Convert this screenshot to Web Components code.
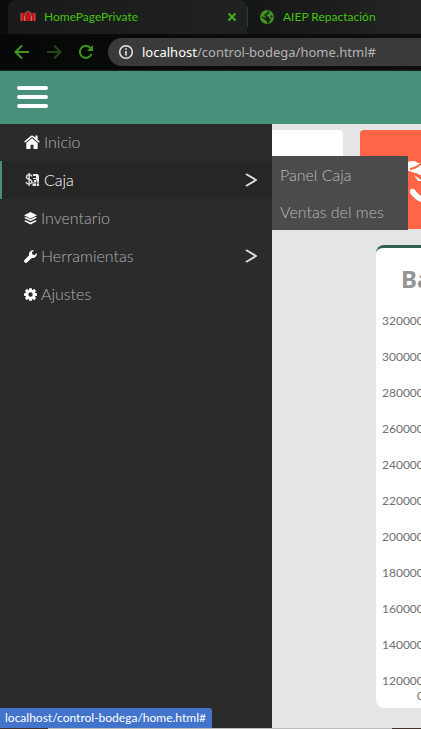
<!DOCTYPE html>
<html lang="es">
<head>
<meta charset="utf-8">
<title>HomePagePrivate</title>
<style>
html, body { height: 100%; margin: 0; }
body { background: #e5e5e5; overflow: hidden; font-family: "Noto Sans", sans-serif; }
</style>
</head>
<body>
<app-window></app-window>
<script>
const define = (name, html) => customElements.define(name, class extends HTMLElement {
  constructor() {
    super();
    this.attachShadow({ mode: "open" }).innerHTML = html;
  }
});

const icons = {
  home: '<svg viewBox="0 0 16 16"><path fill="currentColor" d="M8 4.2 2.3 9v5.2q0 .8.8.8h3.4v-4.2h3V15h3.4q.8 0 .8-.8V9zM15.8 7.6 13.6 5.700V1.500h-2.200v2.300L9 1.800Q8 1 7 1.800L.2 7.600l1 1.100L8 2.900l6.800 5.800z"/></svg>',
  cash: '<svg viewBox="0 0 16 16"><path fill="none" stroke="#d8d8d8" stroke-width="1.500" d="M8 4.500Q7.400 2.800 5.200 2.800C1.900 2.800 1.700 6.300 4.200 7.100L6.100 7.700C8.700 8.500 8.200 12 5.100 12Q2.700 12 2 10M5.200 1v13"/><path fill="#e4e4e4" d="M9 2h4.500L15 3.500V14H8.500v-4H10V8h2V7H9V6h3V4H9z"/><path stroke="#2b2b2b" stroke-width=".8" d="M9 11h6M12.500 8.500V14"/></svg>',
  layers: '<svg viewBox="0 0 16 16"><path fill="currentColor" d="m8 0 8 4-8 4-8-4zM0 7.200l2.200-1L8 9l5.800-2.800 2.200 1-8 4zM0 11.200l2.200-1L8 13l5.800-2.800 2.200 1-8 4.300z"/></svg>',
  wrench: '<svg viewBox="0 0 16 16"><path fill="currentColor" d="M15.600 3.700 13 6.300l-2.600-.7-.7-2.600L12.300.4C8.500-.5 5.300 2.700 6.300 6.500L.8 12a2 2 0 0 0 3.200 3.200l5.500-5.500c3.800 1 7-2.200 6.100-6z"/></svg>',
  gear: '<svg viewBox="0 0 16 16"><circle cx="8" cy="8" r="4.500" fill="none" stroke="currentColor" stroke-width="3.600"/><g stroke="currentColor" stroke-width="3.600"><path d="M8 .2v3M8 12.800v3M.2 8h3M12.800 8h3M2.300 2.300l2 2M11.700 11.700l2 2M13.700 2.300l-2 2M4.300 11.700l-2 2"/></g></svg>'
};

define("browser-tab", `<style>
:host { display: flex; align-items: center; box-sizing: border-box; height: 34px; color: #42c40f; font: 12px/16px Lato, sans-serif; white-space: nowrap; }
.title { flex: 1; }
::slotted(svg) { width: 16px; height: 16px; margin-right: 8px; flex: none; }
</style><slot name="icon"></slot><span class="title"><slot></slot></span><slot name="close"></slot>`);

define("browser-bar", `<style>
:host { display: block; background: #080a0a; }
.tabs { display: flex; background: linear-gradient(90deg, #0b0d0c, #151716 60%, #242525); }
.active { width: 239px; flex: none; padding: 0 9px 0 12px; background: linear-gradient(90deg, #191a1a, #202121); border-radius: 8px 8px 0 0; margin-left: 8px; }
.other { flex: 1; padding-left: 11px; }
.sep { width: 1px; height: 20px; margin-top: 7px; background: #1b4a20; }
button { border: 0; padding: 0; background: none; color: #3e9620; display: flex; }
.close { color: #42b018; }
.forward { color: #234a18; }
.tools { display: flex; align-items: center; height: 36px; padding-left: 14px; gap: 16px; background: linear-gradient(90deg, #060808, #0d0f0f); overflow: hidden; }
.tools svg { width: 16px; height: 16px; }
.address { flex: 1; display: flex; align-items: center; height: 28px; box-sizing: border-box; padding-left: 10px; gap: 8px; background: #3a3a3a; border-radius: 14px 0 0 14px; color: #e8e8e8; margin-left: -2px; }
.url { font-size: 13px; line-height: 20px; white-space: nowrap; color: #b4b4b4; }
.url b { font-weight: 400; color: #fff; }
.line { height: 1px; background: #1b2522; }
</style>
<div class="tabs">
 <browser-tab class="active">
  <svg slot="icon" viewBox="0 0 16 16"><path d="M1 4h3.500v8H1zM11.500 4H15v8h-3.500zM5.500 12V4L8 2.500 10.500 4v8z" fill="#c80f14"/><path d="M5 12V4l3-2 3 2v8M1 4v8M4.500 7v5M11.500 7v5M15 4v8" stroke="#e49a9a" stroke-width=".6" fill="none"/></svg>
  HomePagePrivate
  <button class="close" slot="close" aria-label="Cerrar"><svg width="12" height="12" viewBox="0 0 12 12"><path d="m2.500 2.500 7 7m0-7-7 7" stroke="currentColor" stroke-width="2"/></svg></button>
 </browser-tab>
 <span class="sep"></span>
 <browser-tab class="other">
  <svg slot="icon" viewBox="0 0 16 16"><circle cx="8" cy="8" r="7" fill="#3f951f"/><path fill="#1b1d1c" d="M8.500 2.500h2L9.500 5 7.500 6v1.500H10v2l2 .5-2.500 4-1.500.500V12L6 11 3 8.500 2.500 7 5 8.500h2.500L5.500 7V5.500L8 4zM11.500 6.500h2V9l-2-1z"/></svg>
  AIEP Repactación
 </browser-tab>
</div>
<div class="tools">
 <button aria-label="Atrás"><svg viewBox="0 0 16 16"><path d="M15 8H2M8 1.500 1.500 8 8 14.500" fill="none" stroke="currentColor" stroke-width="2"/></svg></button>
 <button class="forward" aria-label="Adelante"><svg viewBox="0 0 16 16"><path d="M1 8h13M8 1.500 14.500 8 8 14.500" fill="none" stroke="currentColor" stroke-width="2"/></svg></button>
 <button aria-label="Recargar"><svg viewBox="0 0 16 16"><path d="M13.500 10A6 6 0 1 1 12.500 4L14 5.500" fill="none" stroke="currentColor" stroke-width="2"/><path d="M15 1v6H9z" fill="currentColor"/></svg></button>
 <div class="address"><svg viewBox="0 0 16 16"><circle cx="8" cy="8" r="6.300" fill="none" stroke="currentColor" stroke-width="1.500"/><path d="M8 7v4.500M8 4.300v1.500" stroke="currentColor" stroke-width="1.600"/></svg><span class="url"><b>localhost</b>/control-bodega/home.html#</span></div>
</div>
<div class="line"></div>`);

define("app-header", `<style>
:host { display: flex; align-items: center; box-sizing: border-box; height: 53px; padding: 0 17px 2px; background: #48907b; }
button { border: 0; padding: 0; background: none; display: flex; flex-direction: column; gap: 5px; }
i { display: block; width: 31px; height: 4px; border-radius: 2px; background: #fff; }
</style><button aria-label="Menú"><i></i><i></i><i></i></button>`);

customElements.define("menu-item", class extends HTMLElement {
  constructor() {
    super();
    const arrow = this.hasAttribute("arrow")
      ? '<svg class="arrow" viewBox="0 0 12 14"><path d="m1 1 10 6-10 6" fill="none" stroke="currentColor" stroke-width="2"/></svg>' : '';
    this.attachShadow({ mode: "open" }).innerHTML = `<style>
:host { display: block; position: relative; }
a { display: flex; align-items: center; gap: 4px; height: 38px; box-sizing: border-box; padding: 0 15px 0 22px; border-left: 2px solid transparent; color: #b0b0b0; font: 300 16px/24px Lato, sans-serif; text-decoration: none; }
:host([active]) a { background: #262626; border-color: #48907b; color: #fff; }
.icon { display: flex; color: #fff; }
.icon svg { width: var(--icon, 13px); height: var(--icon, 13px); }
.label { flex: 1; }
.arrow { width: 12px; height: 14px; color: #ddd; }
</style><a href="#"><span class="icon">${icons[this.getAttribute("icon")]}</span><span class="label"><slot></slot></span>${arrow}</a><slot name="submenu"></slot>`;
  }
});

define("sub-menu", `<style>
:host { position: absolute; left: 100%; top: -5px; width: 136px; background: #4b4b4b; z-index: 2; }
a { display: block; padding: 0 8px; font: 300 16px/37px Lato, sans-serif; color: #bababa; text-decoration: none; white-space: nowrap; }
</style><a href="#">Panel Caja</a><a href="#">Ventas del mes</a>`);

define("side-menu", `<style>
:host { display: block; background: #2b2b2b; }
nav { display: block; margin-top: -1px; }
.big { --icon: 16px; }
</style><nav>
<menu-item icon="home" class="big">Inicio</menu-item>
<menu-item icon="cash" class="big" active arrow>Caja<sub-menu slot="submenu"></sub-menu></menu-item>
<menu-item icon="layers">Inventario</menu-item>
<menu-item icon="wrench" arrow>Herramientas</menu-item>
<menu-item icon="gear">Ajustes</menu-item>
</nav>`);

define("balance-chart", `<style>
:host { display: block; box-sizing: border-box; background: #fff; border-top: 3px solid #2f6351; border-radius: 8px; padding: 15px 6px 6px; color: #707070; overflow: hidden; }
h2 { margin: 0 0 20px 19px; font: 700 24px/32px "Noto Sans", sans-serif; color: #959595; }
ol { list-style: none; margin: 0; padding: 0; font: 12px/12px Lato, sans-serif; display: grid; gap: 24px; }
.x { font: 12px/12px Lato, sans-serif; margin: 3px 0 0 35px; }
</style><h2>Balance</h2>
<ol><li>320000</li><li>300000</li><li>280000</li><li>260000</li><li>240000</li><li>220000</li><li>200000</li><li>180000</li><li>160000</li><li>140000</li><li>120000</li></ol>
<div class="x">0</div>`);

define("home-content", `<style>
:host { display: block; background: #e5e5e5; overflow: hidden; padding-top: 6px; }
.cards { display: flex; gap: 17px; height: 99px; margin-bottom: 16px; }
.white { width: 71px; flex: none; background: #fff; border-radius: 0 4px 4px 0; }
.orange { flex: 1 0 160px; background: #ff6546; border-radius: 4px; }
.orange svg { display: block; width: 60px; height: 60px; margin: 22px 0 0 46px; }
balance-chart { width: 360px; margin-left: 104px; }
</style><div class="cards"><div class="white"></div><div class="orange">
<svg viewBox="0 0 60 60" fill="#fff"><path d="M0 12q2-3 5-3h4l3 2h13v16h-8L9 21 0 18z"/><path d="M4 17q5 0 12-6M5 22l5 0 8 4" fill="none" stroke="#ff6546" stroke-width="2"/><path d="M8 23l9 6H12z"/><path d="M4 38q2-3 5 0 4 6 10 8l10 2v8l-14-6Q9 48 4 41z"/></svg></div></div>
<balance-chart></balance-chart>`);

define("status-link", `<style>
:host { display: block; box-sizing: border-box; height: 20px; padding: 0 6px 0 5px; background: #4274cb; color: #fff; font: 12px/20px Lato, sans-serif; border-top-right-radius: 3px; white-space: nowrap; }
</style><slot></slot>`);

define("app-window", `<style>
:host { display: flex; flex-direction: column; height: 100vh; position: relative; overflow: hidden; }
main { flex: 1; min-height: 0; display: grid; grid-template-columns: 272px minmax(0, 1fr); }
side-menu { z-index: 1; }
status-link { position: absolute; left: 0; bottom: 1px; z-index: 3; }
.edge { height: 1px; background: linear-gradient(90deg, #44302a 48px, #bbb 48px 392px, #44302a 392px); }
</style><browser-bar></browser-bar><app-header></app-header>
<main><side-menu></side-menu><home-content></home-content></main>
<div class="edge"></div><status-link>localhost/control-bodega/home.html#</status-link>`);
</script>
</body>
</html>
